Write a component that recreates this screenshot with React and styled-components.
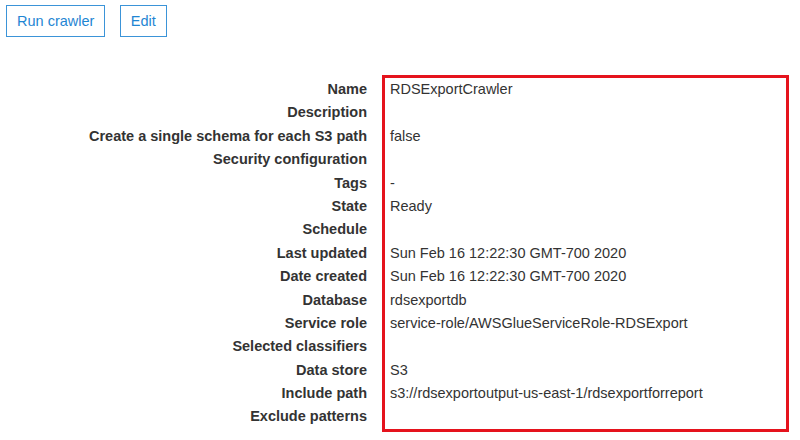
import React from "react";
import styled, { createGlobalStyle } from "styled-components";

const Global = createGlobalStyle`
  html, body { margin: 0; padding: 0; background: #fff; }
  body { font-family: "Liberation Sans", Arial, sans-serif; font-size: 14.5px; color: #333; }
`;

const Page = styled.div`
  width: 800px;
  height: 440px;
  box-sizing: border-box;
  padding: 5px 0 0 6px;
`;

const Toolbar = styled.div`
  display: flex;
  gap: 14.5px;
`;

const Button = styled.button`
  height: 32px;
  padding: 0 10px;
  background: #fff;
  border: 1.5px solid #3b94d8;
  color: #1f86d3;
  font-family: "Liberation Sans", Arial, sans-serif;
  font-size: 14.5px;
  cursor: pointer;
`;

const Details = styled.div`
  display: flex;
  margin-top: 38px;
  gap: 15px;
`;

const LabelCol = styled.div`
  width: 361px;
  padding-top: 3px;
  display: flex;
  flex-direction: column;
`;

const Label = styled.div`
  height: 23.4px;
  line-height: 23.4px;
  text-align: right;
  font-weight: bold;
  color: #333;
  white-space: nowrap;
`;

const ValueBox = styled.div`
  width: 396px;
  border: 3px solid #e5131d;
  padding-left: 5px;
  display: flex;
  flex-direction: column;
`;

const Value = styled.div`
  height: 23.4px;
  line-height: 23.4px;
  color: #333;
  white-space: nowrap;
`;

const rows = [
  ["Name", "RDSExportCrawler"],
  ["Description", ""],
  ["Create a single schema for each S3 path", "false"],
  ["Security configuration", ""],
  ["Tags", "-"],
  ["State", "Ready"],
  ["Schedule", ""],
  ["Last updated", "Sun Feb 16 12:22:30 GMT-700 2020"],
  ["Date created", "Sun Feb 16 12:22:30 GMT-700 2020"],
  ["Database", "rdsexportdb"],
  ["Service role", "service-role/AWSGlueServiceRole-RDSExport"],
  ["Selected classifiers", ""],
  ["Data store", "S3"],
  ["Include path", "s3://rdsexportoutput-us-east-1/rdsexportforreport"],
  ["Exclude patterns", ""],
];

export default function App() {
  return (
    <>
      <Global />
      <Page>
        <Toolbar>
          <Button>Run crawler</Button>
          <Button>Edit</Button>
        </Toolbar>
        <Details>
          <LabelCol>
            {rows.map(([l]) => (
              <Label key={l}>{l}</Label>
            ))}
          </LabelCol>
          <ValueBox>
            {rows.map(([l, v]) => (
              <Value key={l}>{v}</Value>
            ))}
          </ValueBox>
        </Details>
      </Page>
    </>
  );
}
